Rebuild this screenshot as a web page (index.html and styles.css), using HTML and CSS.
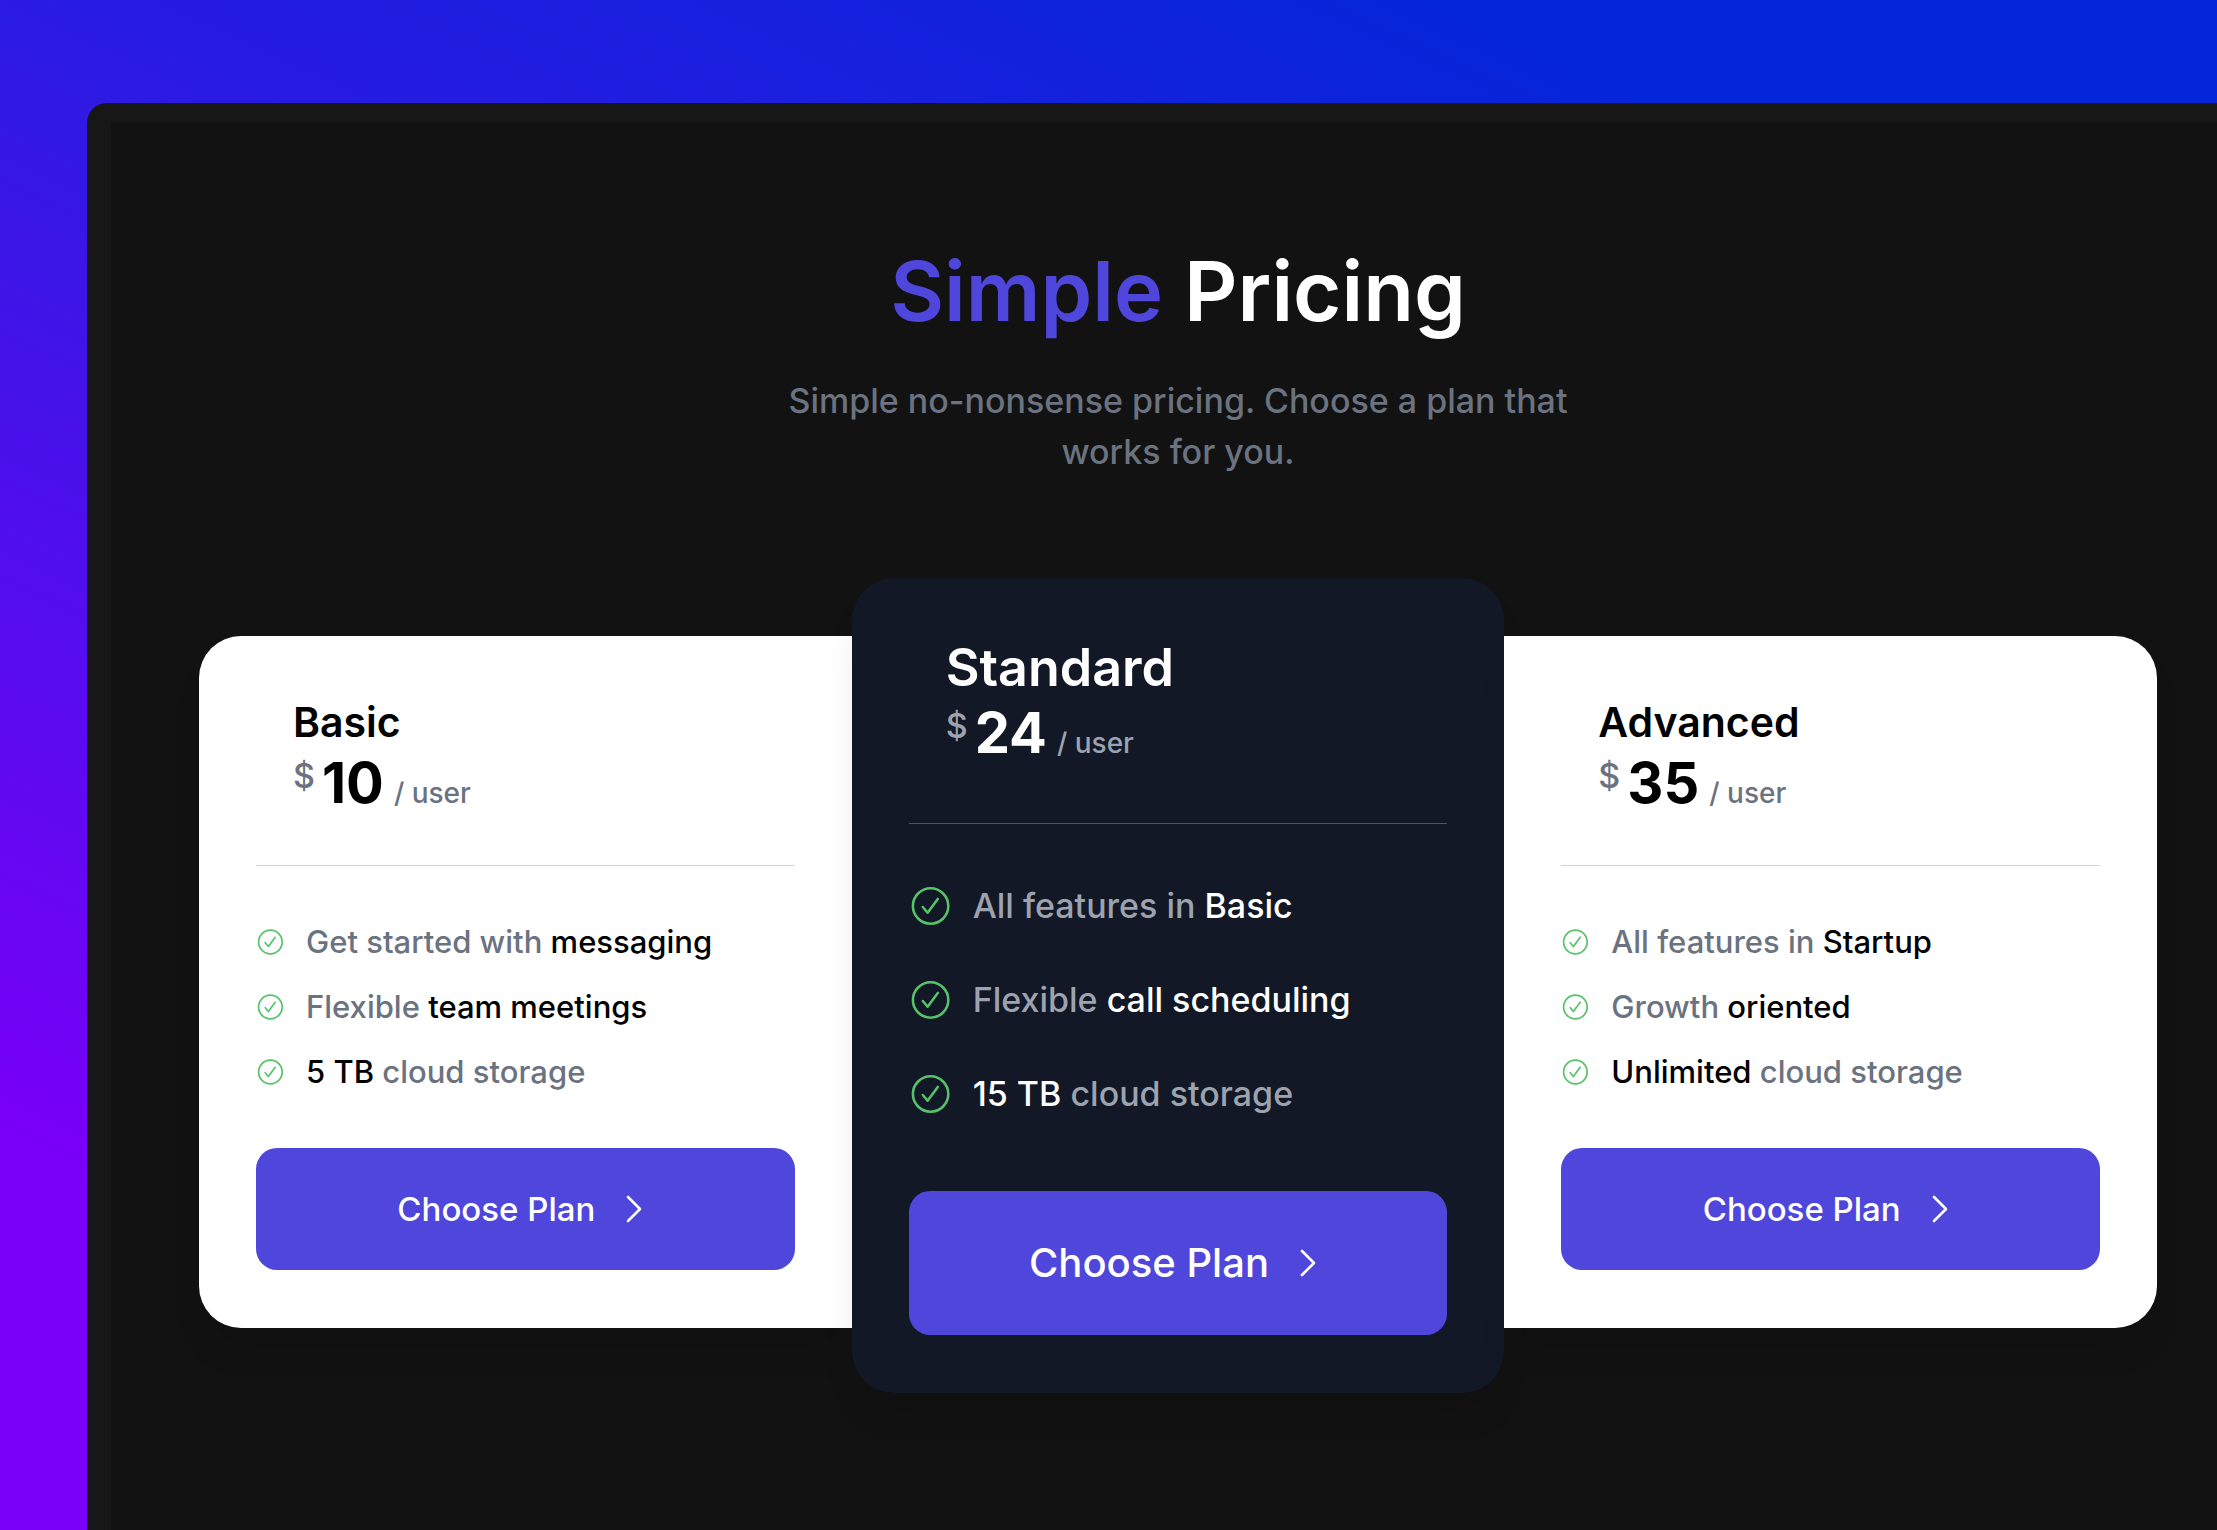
FILE: index.html
```
<!DOCTYPE html>
<html lang="en">
<head>
    <meta charset="UTF-8">
    <meta name="viewport" content="width=device-width, initial-scale=1.0">
    <title>Simple Pricing</title>
    <link rel="stylesheet" href="styles.css">
</head>
<body>
    <!-- Shared icons -->
    <svg class="sprite" aria-hidden="true">
        <symbol id="check" viewBox="0 0 28 28">
            <circle cx="14.4" cy="14" r="11.8" />
            <path d="M9.2 14.7l3.2 3.8 6.8-9.2" />
        </symbol>
        <symbol id="chevron" viewBox="0 0 36 36">
            <path d="M11 6l12 12-12 12" />
        </symbol>
    </svg>

    <div class="window">
        <main class="page">
            <header class="intro">
                <h1 class="title"><span class="accent">Simple</span> Pricing</h1>
                <p class="subtitle">Simple no-nonsense pricing. Choose a plan that works for you.</p>
            </header>

            <div class="plans">
                <section class="plan plan-left">
                    <div class="plan-head">
                        <h2 class="plan-name">Basic</h2>
                        <p class="price">
                            <span class="currency">$</span>
                            <span class="amount">10</span>
                            <span class="unit">/ user</span>
                        </p>
                    </div>
                    <ul class="features">
                        <li><svg class="check"><use href="#check" /></svg><span>Get started with <b>messaging</b></span></li>
                        <li><svg class="check"><use href="#check" /></svg><span>Flexible <b>team meetings</b></span></li>
                        <li><svg class="check"><use href="#check" /></svg><span><b>5 TB</b> cloud storage</span></li>
                    </ul>
                    <button class="choose" type="button">Choose Plan <svg class="chevron"><use href="#chevron" /></svg></button>
                </section>

                <section class="plan plan-featured">
                    <div class="plan-head">
                        <h2 class="plan-name">Standard</h2>
                        <p class="price">
                            <span class="currency">$</span>
                            <span class="amount">24</span>
                            <span class="unit">/ user</span>
                        </p>
                    </div>
                    <ul class="features">
                        <li><svg class="check"><use href="#check" /></svg><span>All features in <b>Basic</b></span></li>
                        <li><svg class="check"><use href="#check" /></svg><span>Flexible <b>call scheduling</b></span></li>
                        <li><svg class="check"><use href="#check" /></svg><span><b>15 TB</b> cloud storage</span></li>
                    </ul>
                    <button class="choose" type="button">Choose Plan <svg class="chevron"><use href="#chevron" /></svg></button>
                </section>

                <section class="plan plan-right">
                    <div class="plan-head">
                        <h2 class="plan-name">Advanced</h2>
                        <p class="price">
                            <span class="currency">$</span>
                            <span class="amount">35</span>
                            <span class="unit">/ user</span>
                        </p>
                    </div>
                    <ul class="features">
                        <li><svg class="check"><use href="#check" /></svg><span>All features in <b>Startup</b></span></li>
                        <li><svg class="check"><use href="#check" /></svg><span>Growth <b>oriented</b></span></li>
                        <li><svg class="check"><use href="#check" /></svg><span><b>Unlimited</b> cloud storage</span></li>
                    </ul>
                    <button class="choose" type="button">Choose Plan <svg class="chevron"><use href="#chevron" /></svg></button>
                </section>
            </div>
        </main>
    </div>
</body>
</html>
```
FILE: styles.css
```
* {
    box-sizing: border-box;
}
body {
    margin: 0;
    min-height: 100vh;
    display: flex;
    flex-direction: column;
    padding: 103px 0 0 87px;
    font-family: Inter, sans-serif;
    font-weight: 450;
    background: linear-gradient(25deg, #7b00f8 15%, #2a1be2 60%, #0425d9 86%);
}
h1, h2, p, ul {
    margin: 0;
    padding: 0;
}
.sprite {
    display: none;
}
.window {
    flex: 1;
    display: flex;
    padding: 19px 0 0 24px;
    border-top-left-radius: 20px;
    background-color: #171717;
}
.page {
    flex: 1;
    padding: 118px 60px 60px 88px;
    background-color: #121212;
}

/* Heading */
.intro {
    text-align: center;
}
.title {
    font-size: 83px;
    font-weight: 600;
    line-height: 102px;
    color: #fff;
}
.accent {
    color: #4f46dc;
}
.subtitle {
    max-width: 816px;
    margin: 33px auto 0;
    font-size: 34px;
    line-height: 51px;
    color: #6b7280;
}

/* Plans */
.plans {
    display: grid;
    grid-template-columns: repeat(3, 1fr);
    align-items: start;
    margin-top: 101px;
}
.plan {
    margin-top: 58px;
    padding: 57px 57px 58px;
    color: #000;
    background-color: #fff;
    box-shadow: 0 28px 35px -7px rgba(0, 0, 0, 0.1);
}
.plan-left {
    border-radius: 42px 0 0 42px;
}
.plan-right {
    border-radius: 0 42px 42px 0;
}
.plan-head {
    padding: 0 37px 50px;
    border-bottom: 1px solid #d1d5db;
}
.plan-name {
    font-size: 41px;
    font-weight: 600;
    line-height: 58px;
}
.price {
    display: flex;
    align-items: baseline;
    color: #6b7280;
}
.currency {
    align-self: flex-start;
    margin-right: 7px;
    font-size: 34px;
    line-height: 50px;
}
.amount {
    margin-right: 10px;
    font-size: 56px;
    font-weight: 700;
    line-height: 64px;
    color: #000;
}
.unit {
    font-size: 28px;
}
.features {
    display: flex;
    flex-direction: column;
    gap: 22px;
    padding: 54px 0 55px;
    list-style: none;
    font-size: 31px;
    line-height: 43px;
    color: #6b7280;
}
.features li {
    display: flex;
    align-items: center;
    gap: 22px;
}
.features b {
    font-weight: inherit;
    color: #000;
}
.check {
    width: 28px;
    height: 28px;
    fill: none;
    stroke: #57c26a;
    stroke-width: 1.7;
    stroke-linecap: round;
    stroke-linejoin: round;
}
.choose {
    display: flex;
    align-items: center;
    justify-content: center;
    gap: 22px;
    width: 100%;
    padding: 35px;
    border: none;
    border-radius: 21px;
    font-family: inherit;
    font-size: 33px;
    font-weight: inherit;
    line-height: 52px;
    color: #fff;
    background-color: #4f46dc;
    cursor: pointer;
}
.choose:hover {
    background-color: #4338ca;
}
.chevron {
    width: 36px;
    height: 36px;
    fill: none;
    stroke: #fff;
    stroke-width: 2.6;
    stroke-linecap: round;
    stroke-linejoin: round;
}

/* Highlighted plan */
.plan-featured {
    margin-top: 0;
    border-radius: 42px;
    color: #fff;
    background-color: #121826;
}
.plan-featured .plan-head {
    padding-bottom: 58px;
    border-color: #4b5563;
}
.plan-featured .plan-name {
    font-size: 52px;
    line-height: 66px;
}
.plan-featured .price {
    color: #9ca3af;
}
.plan-featured .amount {
    color: #fff;
}
.plan-featured .features {
    gap: 43px;
    padding: 56px 0 72px;
    font-size: 34px;
    line-height: 51px;
    color: #9ca3af;
}
.plan-featured .features b {
    color: #fff;
}
.plan-featured .check {
    width: 42px;
    height: 42px;
}
.plan-featured .choose {
    font-size: 40px;
    line-height: 74px;
}
```
